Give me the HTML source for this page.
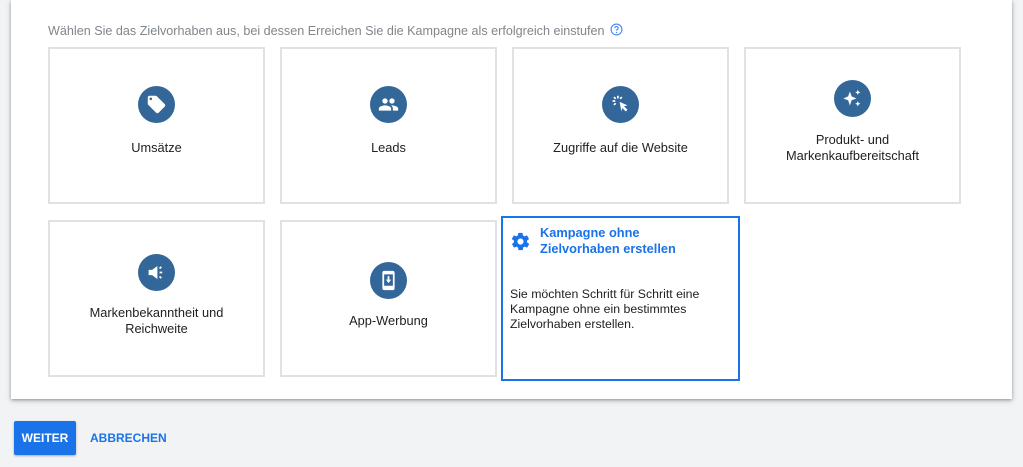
<!DOCTYPE html>
<html><head><meta charset="utf-8"><style>
*{margin:0;padding:0;box-sizing:border-box}
body{width:1023px;height:467px;background:#f1f3f4;font-family:"Liberation Sans",Roboto,sans-serif;position:relative;overflow:hidden;color:#3c4043}
.panel{position:absolute;left:11px;top:0;width:1001px;height:399px;background:#fff;box-shadow:0 1px 3px rgba(0,0,0,.3),0 2px 6px rgba(0,0,0,.15)}
.hint{position:absolute;left:48px;top:23px;font-size:12.6px;color:#80868b}
.card{position:absolute;width:217px;height:157px;border:2px solid #dfe1e5;background:#fff}
.ic{position:absolute;width:37px;height:37px;border-radius:50%;background:#336699}
.ic svg{position:absolute;left:8px;top:8px;width:21px;height:21px}
.lbl{position:absolute;width:217px;text-align:center;font-size:12.8px;line-height:16px;color:#202124}
</style></head><body>
<div class="panel"></div>
<div class="hint">Wählen Sie das Zielvorhaben aus, bei dessen Erreichen Sie die Kampagne als erfolgreich einstufen <svg width="13" height="13" viewBox="0 0 24 24" style="vertical-align:-1px;margin-left:2px"><circle cx="12" cy="12" r="10" fill="none" stroke="#4285f4" stroke-width="2"/><path d="M9 9.5a3 3 0 1 1 4 2.8c-.8.4-1 1-1 1.7" fill="none" stroke="#4285f4" stroke-width="2"/><circle cx="12" cy="17.5" r="1.2" fill="#4285f4"/></svg></div>

<div class="card" style="left:48px;top:47px"></div>
<div class="ic" style="left:138px;top:86px"><svg viewBox="0 0 24 24"><path fill="#fff" d="M21.4 11.6l-9-9C12.1 2.2 11.6 2 11 2H4c-1.1 0-2 .9-2 2v7c0 .6.2 1.1.6 1.4l9 9c.4.4.9.6 1.4.6s1-.2 1.4-.6l7-7c.4-.4.6-.9.6-1.4s-.2-1-.6-1.4zM5.5 7C4.7 7 4 6.3 4 5.5S4.7 4 5.5 4 7 4.7 7 5.5 6.3 7 5.5 7z"/></svg></div>
<div class="lbl" style="left:48px;top:140px">Umsätze</div>

<div class="card" style="left:280px;top:47px"></div>
<div class="ic" style="left:370px;top:86px"><svg viewBox="0 0 24 24"><path fill="#fff" d="M16 11c1.7 0 3-1.3 3-3s-1.3-3-3-3-3 1.3-3 3 1.3 3 3 3zm-8 0c1.7 0 3-1.3 3-3S9.7 5 8 5 5 6.3 5 8s1.3 3 3 3zm0 2c-2.3 0-7 1.2-7 3.5V19h14v-2.5c0-2.3-4.7-3.5-7-3.5zm8 0c-.3 0-.6 0-1 .1 1.2.8 2 2 2 3.4V19h6v-2.5c0-2.3-4.7-3.5-7-3.5z"/></svg></div>
<div class="lbl" style="left:280px;top:140px">Leads</div>

<div class="card" style="left:512px;top:47px"></div>
<div class="ic" style="left:602px;top:86px"><svg viewBox="0 0 24 24"><path fill="#fff" d="M11 9l9 4-4 1 4 4-2 2-4-4-1 4z"/><path stroke="#fff" stroke-width="2" d="M9 2v3M3 8h3M4.5 3.5l2 2M13.5 3.5l-2 2M4.5 12.5l2-2"/></svg></div>
<div class="lbl" style="left:512px;top:140px">Zugriffe auf die Website</div>

<div class="card" style="left:744px;top:47px"></div>
<div class="ic" style="left:834px;top:80px"><svg viewBox="0 0 24 24"><path fill="#fff" d="M9 4l2 5.5L16.5 12 11 14l-2 6-2-6-5.5-2L7 9.5zM18 2l1 2.2 2.2.8-2.2.9L18 8l-.9-2.1L15 5l2.1-.8zM18 15l1 2.1 2.1.9-2.1.9L18 21l-.9-2.1L15 18l2.1-.9z"/></svg></div>
<div class="lbl" style="left:744px;top:132px">Produkt- und<br>Markenkaufbereitschaft</div>

<div class="card" style="left:48px;top:220px"></div>
<div class="ic" style="left:138px;top:254px"><svg viewBox="0 0 24 24"><path fill="#fff" d="M3 9h4l6-4.5v15L7 15H3z"/><path stroke="#fff" stroke-width="2" d="M15.5 12h3M15.5 7.5l2-2M15.5 16.5l2 2"/></svg></div>
<div class="lbl" style="left:48px;top:305px">Markenbekanntheit und<br>Reichweite</div>

<div class="card" style="left:280px;top:220px"></div>
<div class="ic" style="left:370px;top:262px"><svg viewBox="0 0 24 24"><path fill="#fff" d="M17 1H7C5.9 1 5 1.9 5 3v18c0 1.1.9 2 2 2h10c1.1 0 2-.9 2-2V3c0-1.1-.9-2-2-2zm0 17H7V5h10v13z"/><path fill="#fff" d="M11 7h2v4h2l-3 4-3-4h2z"/></svg></div>
<div class="lbl" style="left:280px;top:313px">App-Werbung</div>

<div style="position:absolute;left:501px;top:216px;width:239px;height:165px;border:2px solid #1a73e8;background:#fff"></div>
<svg style="position:absolute;left:510px;top:231px" width="21" height="21" viewBox="0 0 24 24"><path fill="#1a73e8" d="M19.4 13c0-.3.1-.6.1-1s0-.7-.1-1l2.1-1.6c.2-.2.2-.4.1-.6l-2-3.5c-.1-.2-.4-.3-.6-.2l-2.5 1c-.5-.4-1.1-.7-1.7-1l-.4-2.6c0-.2-.2-.4-.5-.4h-4c-.2 0-.4.2-.5.4l-.4 2.6c-.6.3-1.2.6-1.7 1l-2.5-1c-.2-.1-.5 0-.6.2l-2 3.5c-.1.2-.1.5.1.6L4.6 11c0 .3-.1.6-.1 1s0 .7.1 1l-2.1 1.6c-.2.2-.2.4-.1.6l2 3.5c.1.2.4.3.6.2l2.5-1c.5.4 1.1.7 1.7 1l.4 2.6c0 .2.2.4.5.4h4c.2 0 .5-.2.5-.4l.4-2.6c.6-.3 1.2-.6 1.7-1l2.5 1c.2.1.5 0 .6-.2l2-3.5c.1-.2.1-.5-.1-.6L19.4 13zM12 15.5c-1.9 0-3.5-1.6-3.5-3.5s1.6-3.5 3.5-3.5 3.5 1.6 3.5 3.5-1.6 3.5-3.5 3.5z"/></svg>
<div style="position:absolute;left:540px;top:225px;font-size:12.8px;line-height:16px;font-weight:bold;color:#1a73e8">Kampagne ohne<br>Zielvorhaben erstellen</div>
<div style="position:absolute;left:510px;top:287px;font-size:12.3px;line-height:15px;color:#202124">Sie möchten Schritt für Schritt eine<br>Kampagne ohne ein bestimmtes<br>Zielvorhaben erstellen.</div>

<div style="position:absolute;left:14px;top:421px;width:62px;height:34px;background:#1a73e8;border-radius:2px;box-shadow:0 1px 2px rgba(0,0,0,.3);color:#fff;font-size:12px;font-weight:bold;line-height:34px;text-align:center">WEITER</div>
<div style="position:absolute;left:90px;top:431px;font-size:12px;font-weight:bold;color:#1a73e8">ABBRECHEN</div>
</body></html>
